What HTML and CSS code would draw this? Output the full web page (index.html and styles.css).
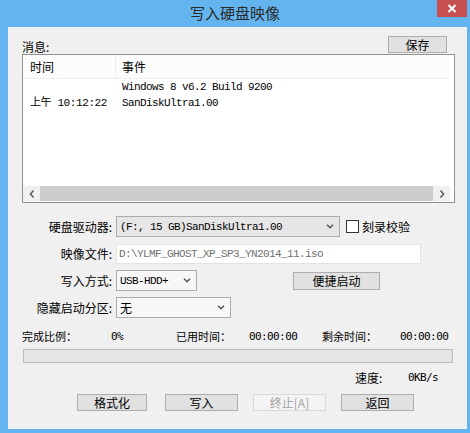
FILE: index.html
```html
<!DOCTYPE html>
<html lang="zh-CN">
<head>
    <meta charset="UTF-8">
    <title>写入硬盘映像</title>
    <link rel="stylesheet" href="styles.css">
</head>
<body>
    <div class="window">
        <div class="titlebar">
            <span class="title">写入硬盘映像</span>
            <div class="close">
                <svg width="10" height="9" viewBox="0 0 10 9"><path d="M1.5 1 L8.5 8 M8.5 1 L1.5 8" stroke="#fff" stroke-width="2"/></svg>
            </div>
        </div>

        <div class="content">
            <div class="msg-head">
                <span class="msg-label">消息:</span>
                <button type="button" class="btn save">保存</button>
            </div>

            <div class="listbox">
                <div class="list-head">
                    <div class="col-time">时间</div>
                    <div class="col-event">事件</div>
                </div>
                <div class="list-rows">
                    <div class="row"><div class="col-time"></div><div class="col-event">Windows 8 v6.2 Build 9200</div></div>
                    <div class="row"><div class="col-time">上午 10:12:22</div><div class="col-event">SanDiskUltra1.00</div></div>
                </div>
                <div class="hscroll">
                    <div class="arrow"><svg width="6" height="8" viewBox="0 0 6 8"><path d="M4.5 0.5 L1.5 4 L4.5 7.5" fill="none" stroke="#606060" stroke-width="1.6"/></svg></div>
                    <div class="thumb"></div>
                    <div class="arrow"><svg width="6" height="8" viewBox="0 0 6 8"><path d="M1.5 0.5 L4.5 4 L1.5 7.5" fill="none" stroke="#606060" stroke-width="1.6"/></svg></div>
                </div>
            </div>

            <div class="form">
                <div class="label">硬盘驱动器:</div>
                <div class="field">
                    <div class="select drive">
                        <span>(F:, 15 GB)SanDiskUltra1.00</span>
                        <svg width="8" height="5" viewBox="0 0 8 5"><path d="M1 0.8 L4 3.8 L7 0.8" fill="none" stroke="#555" stroke-width="1.5"/></svg>
                    </div>
                    <span class="check"></span>
                    <span class="check-label">刻录校验</span>
                </div>

                <div class="label">映像文件:</div>
                <div class="field">
                    <div class="path">D:\YLMF_GHOST_XP_SP3_YN2014_11.iso</div>
                </div>

                <div class="label">写入方式:</div>
                <div class="field">
                    <div class="select light mode">
                        <span>USB-HDD+</span>
                        <svg width="8" height="5" viewBox="0 0 8 5"><path d="M1 0.8 L4 3.8 L7 0.8" fill="none" stroke="#555" stroke-width="1.5"/></svg>
                    </div>
                    <button type="button" class="btn quick">便捷启动</button>
                </div>

                <div class="label">隐藏启动分区:</div>
                <div class="field">
                    <div class="select light hide">
                        <span class="cjk">无</span>
                        <svg width="8" height="5" viewBox="0 0 8 5"><path d="M1 0.8 L4 3.8 L7 0.8" fill="none" stroke="#555" stroke-width="1.5"/></svg>
                    </div>
                </div>
            </div>

            <div class="stats">
                <span>完成比例：</span>
                <span class="num">0%</span>
                <span>已用时间：</span>
                <span class="num">00:00:00</span>
                <span>剩余时间：</span>
                <span class="num">00:00:00</span>
            </div>

            <div class="progress"></div>

            <div class="speed">
                <span></span>
                <span>速度:</span>
                <span class="num">0KB/s</span>
            </div>

            <div class="actions">
                <button type="button" class="btn format">格式化</button>
                <button type="button" class="btn">写入</button>
                <button type="button" class="btn" disabled>终止[A]</button>
                <button type="button" class="btn">返回</button>
            </div>
        </div>
    </div>
</body>
</html>
```

FILE: styles.css
```css
* { box-sizing: border-box; }
body { margin: 0; font-family: "Noto Sans CJK SC", sans-serif; font-size: 12px; color: #000; }

.window { width: 470px; height: 433px; background: #64b5ef; padding: 0 3px 4px 8px; display: flex; flex-direction: column; }
.titlebar { height: 27px; margin: 0 -3px 0 -8px; position: relative; display: flex; justify-content: center; align-items: center; padding-bottom: 3px; }
.title { font-size: 15px; color: #2a2a2a; }
.close { position: absolute; top: 0; right: 3px; width: 30px; height: 17px; background: #c75050; display: flex; align-items: center; justify-content: center; }

.content { flex: 1; background: #f0f0f0; padding: 9px 12px 0 14px; display: flex; flex-direction: column; }

.btn { height: 17px; padding: 0; font-family: "Noto Sans CJK SC", sans-serif; font-size: 12px; line-height: 15px; color: #000; background: #e1e1e1; border: 1px solid #adadad; border-radius: 0; }
.btn:disabled { background: #f4f4f4; border-color: #d9d9d9; color: #a3a3a3; }

.msg-head { height: 18px; display: flex; justify-content: space-between; padding-right: 8px; }
.msg-label { align-self: flex-end; line-height: 14px; }
.save { width: 59px; }

.listbox { height: 149px; border: 1px solid #8e8f8f; background: #fff; display: flex; flex-direction: column; }
.list-head { height: 24px; background: #fcfcfc; border-bottom: 1px solid #ededed; display: flex; margin-right: 5px; }
.list-head > div { display: flex; align-items: center; }
.list-head .col-time { border-right: 1px solid #ededed; }
.col-time { width: 93px; padding-left: 7px; flex-shrink: 0; }
.col-event { padding-left: 6px; }
.list-rows { flex: 1; font-family: "Liberation Mono", "Noto Sans CJK SC", monospace; font-size: 11px; letter-spacing: -0.6px; }
.list-rows .row { display: flex; height: 16px; line-height: 16px; }
.list-rows .col-time { letter-spacing: -0.4px; }

.hscroll { height: 15px; margin: 0 4px 1px 0; background: #f0f0f0; display: flex; }
.arrow { width: 17px; display: flex; align-items: center; justify-content: center; }
.thumb { flex: 1; background: #cdcdcd; }

.form { margin-top: 13px; display: grid; grid-template-columns: 90px 1fr; column-gap: 4px; row-gap: 6px; }
.label { height: 21px; line-height: 21px; text-align: right; }
.field { height: 21px; display: flex; align-items: center; }
.select { height: 21px; border: 1px solid #acacac; background: #e6e6e6; display: flex; align-items: center; justify-content: space-between; padding: 0 5px 0 3px; font-family: "Liberation Mono", monospace; font-size: 11px; letter-spacing: -0.6px; }
.select.light { background: #f7f7f7; }
.select .cjk { font-family: "Noto Sans CJK SC", sans-serif; font-size: 12px; letter-spacing: 0; }
.drive { width: 224px; }
.mode { width: 81px; }
.hide { width: 115px; }
.check { width: 13px; height: 13px; border: 1px solid #333; background: #fff; margin-left: 6px; }
.check-label { margin-left: 3px; }
.path { width: 305px; height: 20px; line-height: 18px; border: 1px solid #e3e3e3; background: #fff; color: #707070; padding-left: 2px; font-family: "Liberation Mono", monospace; font-size: 11px; letter-spacing: -0.6px; }
.quick { width: 87px; height: 18px; margin-left: 96px; }

.stats { margin-top: 10px; height: 14px; display: grid; grid-template-columns: 89px 65px 73px 73px 78px auto; align-items: center; font-size: 11px; }
.num { font-family: "DejaVu Sans Mono", monospace; font-size: 11px; letter-spacing: -0.6px; }

.progress { margin: 7px 2px 0 1px; height: 14px; border: 1px solid #bcbcbc; background: #e6e6e6; }

.speed { margin-top: 6px; height: 14px; display: grid; grid-template-columns: 333px 53px auto; align-items: center; }

.actions { margin-top: 11px; display: flex; gap: 15px; padding-left: 55px; }
.actions .btn { width: 73px; }
.actions .format { width: 70px; margin-right: 3px; }
```
